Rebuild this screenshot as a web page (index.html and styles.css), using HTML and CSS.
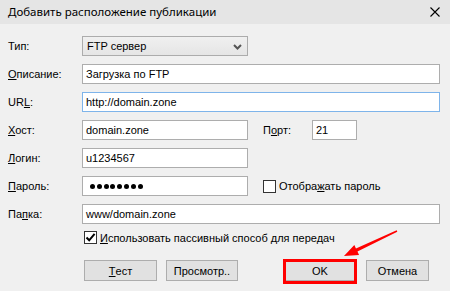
FILE: index.html
```html
<!DOCTYPE html>
<html lang="ru">
<head>
<meta charset="utf-8">
<link rel="stylesheet" href="styles.css">
</head>
<body>
<div class="window">
  <div class="titlebar">
    <span class="title">Добавить расположение публикации</span>
    <svg class="close" width="10" height="10" viewBox="0 0 10 10"><path d="M0.5 0.5 L9.5 9.5 M9.5 0.5 L0.5 9.5" stroke="#000" stroke-width="1.1" fill="none"/></svg>
  </div>
  <div class="form">
    <div class="row row-select">
      <span class="label">Тип:</span>
      <div class="select">
        <span>FTP сервер</span>
        <svg class="chev" width="9" height="6" viewBox="0 0 9 6"><path d="M1 1 L4.5 4.5 L8 1" stroke="#555" stroke-width="2" fill="none"/></svg>
      </div>
    </div>
    <div class="row">
      <span class="label"><u>О</u>писание:</span>
      <div class="field wide">Загрузка по FTP</div>
    </div>
    <div class="row">
      <span class="label">UR<u>L</u>:</span>
      <div class="field wide focus">http://domain.zone</div>
    </div>
    <div class="row">
      <span class="label"><u>Х</u>ост:</span>
      <div class="field short">domain.zone</div>
      <span class="side-label">П<u>о</u>рт:</span>
      <div class="field port">21</div>
    </div>
    <div class="row">
      <span class="label"><u>Л</u>огин:</span>
      <div class="field short">u1234567</div>
    </div>
    <div class="row">
      <span class="label"><u>П</u>ароль:</span>
      <div class="field short dots"><i></i><i></i><i></i><i></i><i></i><i></i><i></i><i></i></div>
      <span class="check side-check"><span class="box"></span>Отобра<u>ж</u>ать пароль</span>
    </div>
    <div class="row">
      <span class="label">Па<u>п</u>ка:</span>
      <div class="field wide">www/domain.zone</div>
    </div>
    <div class="check-row">
      <span class="check"><span class="box checked"><svg width="11" height="11" viewBox="0 0 11 11"><path d="M1.5 5.5 L4.2 8.3 L9.6 1.8" stroke="#000" stroke-width="2" fill="none"/></svg></span><u>И</u>спользовать пассивный способ для передач</span>
    </div>
    <div class="buttons">
      <div class="btn b-test"><u>Т</u>ест</div>
      <div class="btn b-view">Просмотр..</div>
      <div class="btn b-ok">OK</div>
      <div class="btn b-cancel">Отмена</div>
    </div>
  </div>
  <svg class="annot" width="450" height="291" viewBox="0 0 450 291">
    <rect x="284.5" y="260.5" width="71" height="22" fill="none" stroke="#f00" stroke-width="3"/>
    <polygon fill="#f00" points="396.68,230.32 355.95,248.42 354.35,245.03 344,256 359.05,254.97 357.45,251.58 397.32,231.68"/>
  </svg>
</div>
</body>
</html>
```
FILE: styles.css
```css
html, body {
  margin: 0;
  padding: 0;
}
body {
  width: 450px;
  height: 291px;
  overflow: hidden;
  background: #f0f0f0;
  font-family: "Liberation Sans", Arial, sans-serif;
  font-size: 11px;
  color: #000;
}
.window {
  position: relative;
  width: 450px;
  height: 291px;
}
.titlebar {
  height: 24px;
  background: #e5e5e5;
  display: flex;
  align-items: center;
  justify-content: space-between;
  padding: 0 10px 2px 8px;
  box-sizing: border-box;
}
.title {
  font-family: "Noto Sans", sans-serif;
  font-size: 11.5px;
  color: #000;
}
.close {
  margin-top: 2px;
}
.form {
  padding: 12px 0 0 8px;
  display: flex;
  flex-direction: column;
  gap: 8px;
}
.row {
  display: flex;
  align-items: center;
  height: 20px;
}
.label {
  width: 74px;
  flex: none;
}
u {
  text-decoration: underline;
  text-underline-offset: 1px;
}
.select {
  width: 166px;
  height: 20px;
  box-sizing: border-box;
  border: 1px solid #acacac;
  background: linear-gradient(#f0f0f0, #e5e5e5);
  display: flex;
  align-items: center;
  justify-content: space-between;
  padding: 0 5px 0 4px;
}
.chev {
  margin-top: 1px;
}
.field {
  height: 20px;
  box-sizing: border-box;
  border: 1px solid #adadad;
  background: #fff;
  padding-left: 3px;
  display: flex;
  align-items: center;
}
.field.focus {
  border-color: #7eb4ea;
}
.wide {
  width: 358px;
}
.short {
  width: 166px;
}
.port {
  width: 45px;
}
.side-label {
  margin-left: 15px;
  width: 49px;
}
.dots {
  gap: 1.8px;
  padding-left: 7px;
}
.dots i {
  width: 5px;
  height: 5px;
  border-radius: 50%;
  background: #000;
}
.check {
  display: flex;
  align-items: center;
}
.side-check {
  margin-left: 15px;
}
.box {
  width: 13px;
  height: 13px;
  box-sizing: border-box;
  border: 1px solid #333;
  background: #fff;
  margin-right: 3px;
  display: flex;
  align-items: center;
  justify-content: center;
}
.check-row {
  margin-top: -1px;
  padding-left: 76px;
  height: 13px;
  display: flex;
  align-items: center;
}
.buttons {
  margin-top: 8px;
  display: flex;
  padding-left: 76px;
}
.btn {
  height: 21px;
  box-sizing: border-box;
  border: 1px solid #adadad;
  background: #e1e1e1;
  display: flex;
  align-items: center;
  justify-content: center;
}
.b-test { width: 73px; }
.b-view { width: 72px; margin-left: 9px; }
.b-ok { width: 72px; margin-left: 46px; }
.b-cancel { width: 63px; margin-left: 10px; }
.annot {
  position: absolute;
  left: 0;
  top: 0;
  pointer-events: none;
}
```
